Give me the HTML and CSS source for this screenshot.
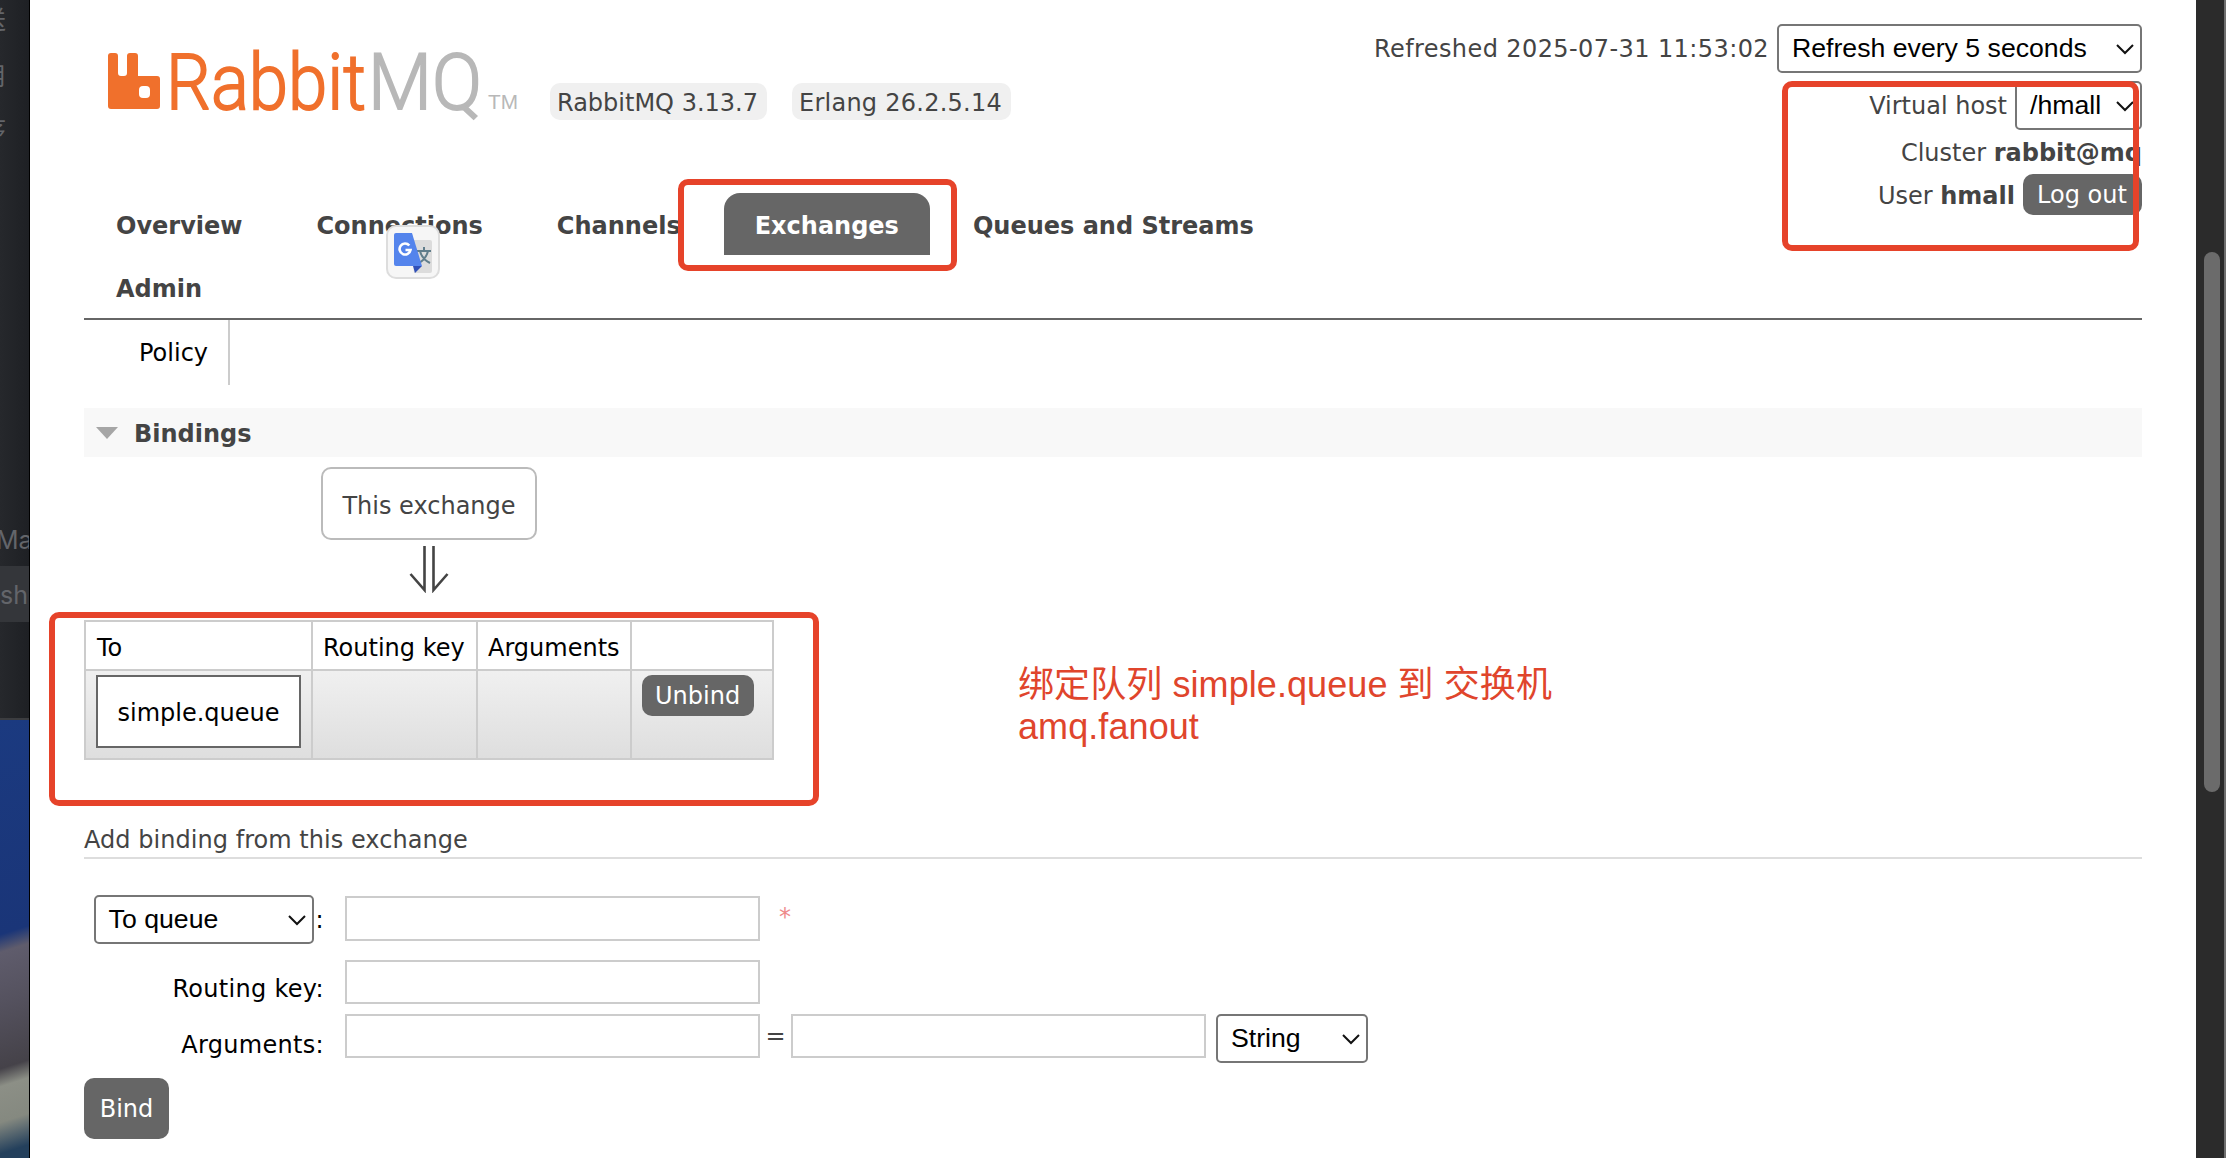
FILE: index.html
```html
<!DOCTYPE html>
<html lang="zh-CN">
<head>
<meta charset="utf-8">
<title>RabbitMQ Management</title>
<link rel="stylesheet" href="styles.css">
</head>
<body>
<div class="screen">
  <aside class="backdrop">
    <div class="editor">
      <span class="editor-text t1">送</span>
      <span class="editor-text t2">用</span>
      <span class="editor-text t3">序</span>
      <span class="editor-text t4">Ma</span>
      <span class="editor-row"></span>
      <span class="editor-text t5">sh</span>
    </div>
    <div class="wallpaper"></div>
  </aside>

  <div class="page">
    <header class="header">
      <div class="brand">
        <svg class="logo" width="412" height="62" viewBox="0 0 412 62">
          <path fill="#f0702c" d="M4 3h4q3 0 3 3v17q0 3 3 3h3q3 0 3-3V6q0-3 3-3h5q3 0 3 3v20h19q3 0 3 3v27q0 3-3 3H4q-3 0-3-3V6q0-3 3-3z"/>
          <rect x="32" y="36" width="11" height="12" rx="4" fill="#fff"/>
          <text class="logo-word orange" x="59" y="58.500" textLength="200" lengthAdjust="spacingAndGlyphs">Rabbit</text>
          <text class="logo-word gray" x="261" y="58.500" textLength="114" lengthAdjust="spacingAndGlyphs">MQ</text>
          <text class="logo-tm" x="381" y="59" textLength="30" lengthAdjust="spacingAndGlyphs">TM</text>
        </svg>
        <span class="chip">RabbitMQ 3.13.7</span>
        <span class="chip erlang">Erlang 26.2.5.14</span>
      </div>
      <div class="status">
        <div class="status-row r1"><span class="refreshed">Refreshed 2025-07-31 11:53:02</span>
          <span class="select refresh">Refresh every 5 seconds<svg class="chev" width="18" height="12" viewBox="0 0 18 12"><path d="M1 2l8 8 8-8"/></svg></span></div>
        <div class="status-row r2"><span>Virtual host</span>
          <span class="select vhost">/hmall<svg class="chev" width="18" height="12" viewBox="0 0 18 12"><path d="M1 2l8 8 8-8"/></svg></span></div>
        <div class="status-row r3"><span>Cluster <b>rabbit@mq</b></span></div>
        <div class="status-row r4"><span>User <b>hmall</b></span><span class="button logout">Log out</span></div>
      </div>
    </header>

    <nav class="tabs">
      <a class="tab">Overview</a>
      <a class="tab">Connections</a>
      <a class="tab">Channels</a>
      <a class="tab active">Exchanges</a>
      <a class="tab">Queues and Streams</a>
      <a class="tab">Admin</a>
    </nav>
    <div class="side"><a class="policy">Policy</a></div>

    <h2 class="section"><svg width="24" height="14" viewBox="0 0 24 14"><path d="M1 1h22L12 13z" fill="#a6a6a6"/></svg><span>Bindings</span></h2>

    <div class="flow">
      <span class="exchange">This exchange</span>
      <svg class="arrow" width="40" height="48" viewBox="0 0 40 48"><path d="M15.500 1v44L1.500 29M24.500 1v44L38.500 29" fill="none" stroke="#444" stroke-width="2.6"/></svg>
    </div>

    <table class="bindings">
      <tr><th class="c1">To</th><th class="c2">Routing key</th><th class="c3">Arguments</th><th class="c4"></th></tr>
      <tr><td><span class="queue">simple.queue</span></td><td></td><td></td><td><span class="button">Unbind</span></td></tr>
    </table>

    <h3 class="subhead">Add binding from this exchange</h3>

    <form class="form">
      <div class="row first">
        <div class="label"><span class="select dest">To queue<svg class="chev" width="18" height="12" viewBox="0 0 18 12"><path d="M1 2l8 8 8-8"/></svg></span>:</div>
        <span class="input"></span><span class="star">*</span>
      </div>
      <div class="row second"><div class="label">Routing key:</div><span class="input"></span></div>
      <div class="row third"><div class="label">Arguments:</div><span class="input"></span><span class="eq">=</span><span class="input"></span>
        <span class="select type">String<svg class="chev" width="18" height="12" viewBox="0 0 18 12"><path d="M1 2l8 8 8-8"/></svg></span></div>
      <span class="bind">Bind</span>
    </form>
  </div>

  <div class="scroll"><div class="thumb"></div></div>

  <div class="mark mark-tab"></div>
  <div class="mark mark-user"></div>
  <div class="mark mark-table"></div>
  <p class="note">绑定队列 simple.queue 到 交换机<br>amq.fanout</p>

  <div class="translate">
    <svg width="40" height="42" viewBox="0 0 40 42">
      <path d="M18 8h19q2 0 2 2v29q0 2-2 2H21z" fill="#dcdcdc"/>
      <path d="M24 19h14M31 15v4M27 19q2 8 10 12M35 19q-2 8-9 12" fill="none" stroke="#607d8b" stroke-width="2"/>
      <path d="M20 34h9l-7 7z" fill="#3050b8"/>
      <path d="M3 1h16l10 33H3q-2 0-2-2V3q0-2 2-2z" fill="#5484ec"/>
      <path d="M16.300 13.500A5.500 5.500 0 1 0 17.500 18H12.500" fill="none" stroke="#fff" stroke-width="2.600"/>
    </svg>
  </div>
</div>
</body>
</html>
```
FILE: styles.css
```css
* { box-sizing: border-box; }
body { margin: 0; font: 24px/30px "DejaVu Sans", Verdana, sans-serif; color: #444; }
.screen { position: relative; display: flex; width: 2226px; height: 1158px; overflow: hidden; background: #fff; }

.backdrop { width: 30px; flex: none; display: flex; flex-direction: column; border-right: 1px solid #000; overflow: hidden; }
.editor { position: relative; height: 720px; background: linear-gradient(90deg, #26282c, #1e2024); border-bottom: 2px solid #3c3d40; overflow: hidden; }
.editor-text { position: absolute; font: 25px/30px Inter, "Noto Sans CJK SC", sans-serif; color: #63656a; white-space: nowrap; z-index: 1; }
.editor-row { position: absolute; left: 0; top: 566px; width: 30px; height: 56px; background: #34363a; }
.t1 { left: -19px; top: 5px; }
.t2 { left: -19px; top: 61px; }
.t3 { left: -19px; top: 115px; }
.t4 { left: -4px; top: 525px; }
.t5 { left: 0; top: 580px; }
.wallpaper { flex: 1; background: linear-gradient(162deg, #1b3a80 0, #1a3578 48%, #5f5c6c 52%, #55525f 63%, #454249 78%, #8c8f86 82%, #858980 90%, #24405c 97%); }

.page { flex: none; width: 2166px; padding: 0 54px; }
.header { display: flex; justify-content: space-between; height: 193px; }
.brand { display: flex; align-items: flex-start; padding: 50px 0 0 23px; }
.logo { margin-right: 31px; overflow: visible; }
.logo-word { font: 300 78px Roboto, sans-serif; stroke-width: 1.8px; }
.orange { fill: #f0702c; stroke: #f0702c; }
.gray { fill: #b8b8b8; stroke: #b8b8b8; }
.logo-tm { font: 21px "Liberation Sans", sans-serif; fill: #b8b8b8; }
.chip { margin: 33px 25px 0 0; width: 217px; height: 37px; padding: 6px 0 0 7px; line-height: 29px; border-radius: 10px; background: #f0f0f0; white-space: nowrap; }
.erlang { width: 219px; padding-left: 7px; letter-spacing: .25px; }
.status { padding-top: 24px; }
.status-row { display: flex; justify-content: flex-end; align-items: flex-start; gap: 8px; white-space: nowrap; }
.refreshed { letter-spacing: .41px; }
.r1 { height: 57px; line-height: 50px; }
.r2 { height: 60px; line-height: 50px; }
.r3 { height: 33px; line-height: 24px; }
.r4 { line-height: 44px; }
.select { display: inline-flex; align-items: center; justify-content: space-between; height: 49px; padding: 0 6px 0 13px; border: 2px solid #767676; border-radius: 5px; background: #fff; color: #000; font: 26.67px/45px "Liberation Sans", Arial, sans-serif; white-space: nowrap; }
.chev path { fill: none; stroke: #111; stroke-width: 2; }
.refresh { width: 365px; }
.vhost { width: 127px; }
.button { display: inline-block; height: 41px; padding: 0 13px; border-radius: 10px; background: #666; color: #fff; line-height: 43px; }
.logout { width: 119px; padding-left: 14px; }

.tabs { display: flex; flex-wrap: wrap; column-gap: 12px; height: 127px; padding: 0 700px 0 1px; border-bottom: 2px solid #666; }
.tab { height: 62px; padding: 0 31px; font-weight: bold; line-height: 66px; }
.active { background: #666; color: #fff; border-radius: 16px 16px 0 0; }
.side { display: flex; height: 88px; }
.policy { height: 65px; width: 146px; padding-left: 55px; border-right: 2px solid #ccc; color: #000; line-height: 67px; }

.section { display: flex; align-items: center; gap: 15px; height: 49px; margin: 0; padding-left: 11px; background: #f8f8f8; font-size: 24px; line-height: 30px; }
.section span { padding-top: 3px; }
.flow { display: flex; flex-direction: column; align-items: center; width: 690px; height: 163px; padding-top: 10px; }
.exchange { height: 73px; width: 216px; border: 2px solid #bbb; border-radius: 10px; line-height: 74px; text-align: center; }
.arrow { margin-top: 5px; }

.bindings { width: 690px; table-layout: fixed; border-collapse: collapse; height: 140px; }
.bindings th, .bindings td { padding: 0 10px; border: 2px solid #ccc; text-align: left; vertical-align: top; font-weight: normal; color: #000; white-space: nowrap; }
.bindings th { height: 49px; padding: 6px 10px 0; line-height: 40px; }
.bindings td { height: 89px; padding-top: 4px; background: linear-gradient(#f0f0f0, #dedede); }
.bindings .c1 { width: 227px; padding-left: 11px; }
.c2 { width: 165px; }
.c3 { width: 154px; }
.queue { display: block; width: 205px; height: 73px; border: 2px solid #666; background: #fff; line-height: 72px; text-align: center; }
.bindings .button { display: block; width: 112px; }

.subhead { margin: 64px 0 0; height: 35px; border-bottom: 2px solid #ddd; font-size: 24px; font-weight: normal; line-height: 32px; letter-spacing: .04px; }
.form { display: flex; flex-direction: column; padding-top: 36px; }
.row { display: flex; align-items: flex-start; color: #000; }
.first { height: 65px; }
.second { height: 54px; }
.third { height: 64px; }
.label { display: flex; justify-content: flex-end; align-items: center; width: 240px; margin-right: 21px; white-space: nowrap; letter-spacing: .3px; }
.first .label { height: 49px; }
.second .label { line-height: 58px; }
.third .label { line-height: 62px; }
.dest { width: 220px; margin-right: 2px; letter-spacing: 0; }
.input { width: 415px; height: 44px; border: 2px solid #ccc; background: #fff; }
.first .input { height: 45px; margin-top: 1px; }
.star { margin: 7px 0 0 19px; color: #ee8a8a; }
.eq { width: 31px; text-align: center; line-height: 44px; color: #444; }
.type { width: 152px; margin-left: 10px; }
.bind { width: 85px; height: 61px; border-radius: 10px; background: #666; color: #fff; line-height: 63px; text-align: center; }

.scroll { width: 30px; flex: none; padding: 252px 0 0 8px; background: #2b2b2b; border-right: 2px solid #6f6f6f; }
.thumb { width: 16px; height: 540px; border-radius: 8px; background: #6b6b6b; }

.mark { position: absolute; border: 6px solid #e6432a; border-radius: 10px; }
.mark-tab { left: 678px; top: 179px; width: 279px; height: 92px; }
.mark-user { left: 1782px; top: 81px; width: 357px; height: 170px; }
.mark-table { left: 49px; top: 612px; width: 770px; height: 194px; }
.note { position: absolute; left: 1018px; top: 664px; margin: 0; font: 36px/42px "Liberation Sans", "Noto Sans CJK SC", sans-serif; letter-spacing: .08px; color: #e0452c; white-space: nowrap; }
.translate { position: absolute; left: 386px; top: 225px; width: 54px; height: 54px; padding: 5px; border: 2px solid #ddd; border-radius: 10px; background: #f6f6f6; }
.translate svg { display: block; }
```
